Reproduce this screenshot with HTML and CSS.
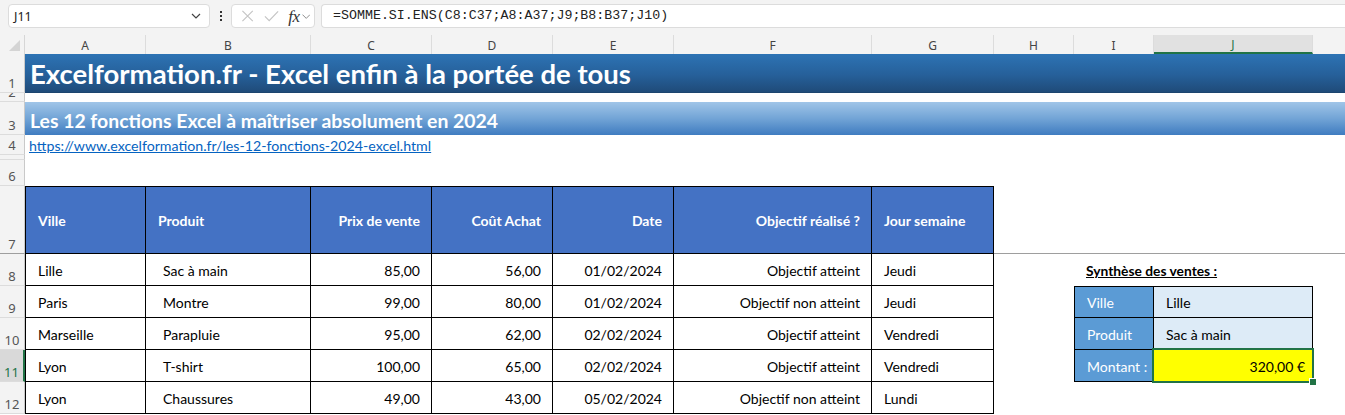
FILE: index.html
```html
<!DOCTYPE html>
<html lang="fr">
<head>
<meta charset="utf-8">
<title>Excelformation</title>
<link rel="stylesheet" href="styles.css">
</head>
<body>
<div class="app">
  <div class="fbar">
    <div class="namebox">
      <span>J11</span>
      <svg class="chev" width="10" height="6" viewBox="0 0 10 6"><path d="M1 1 L5 5 L9 1" fill="none" stroke="#444" stroke-width="1.2"/></svg>
    </div>
    <div class="vdots"><i></i><i></i><i></i></div>
    <div class="fnbox">
      <svg width="14" height="14" viewBox="0 0 14 14"><path d="M1.5 1.5 L12.5 12.5 M12.5 1.5 L1.5 12.5" stroke="#c4c4c4" stroke-width="1.2" fill="none"/></svg>
      <svg width="16" height="14" viewBox="0 0 16 14"><path d="M1 7.5 L5.5 12 L15 2" stroke="#c4c4c4" stroke-width="1.2" fill="none"/></svg>
      <span class="fx">fx</span>
      <svg class="chev small" width="9" height="5" viewBox="0 0 9 5"><path d="M0.5 0.5 L4.5 4.5 L8.5 0.5" fill="none" stroke="#888" stroke-width="1"/></svg>
    </div>
    <div class="formula">=SOMME.SI.ENS(C8:C37;A8:A37;J9;B8:B37;J10)</div>
  </div>

  <div class="sheet">
    <!-- column headers -->
    <div class="corner"><span class="tri"></span></div>
    <div class="ch">A</div><div class="ch">B</div><div class="ch">C</div><div class="ch">D</div>
    <div class="ch">E</div><div class="ch">F</div><div class="ch">G</div><div class="ch">H</div>
    <div class="ch">I</div><div class="ch sel">J</div><div class="ch last"></div>

    <!-- row 1 -->
    <div class="rh">1</div>
    <div class="title span11">Excelformation.fr - Excel enfin à la portée de tous</div>
    <!-- row 2 -->
    <div class="rh">2</div>
    <div class="blank span11"></div>
    <!-- row 3 -->
    <div class="rh">3</div>
    <div class="subtitle span11">Les 12 fonctions Excel à maîtriser absolument en 2024</div>
    <!-- row 4 -->
    <div class="rh">4</div>
    <div class="link span11"><span>https://www.excelformation.fr/les-12-fonctions-2024-excel.html</span></div>
    <!-- row 5 -->
    <div class="rh">5</div>
    <div class="blank span11"></div>
    <!-- row 6 -->
    <div class="rh">6</div>
    <div class="blank span11"></div>

    <!-- row 7 header -->
    <div class="rh freeze">7</div>
    <div class="th first">Ville</div>
    <div class="th">Produit</div>
    <div class="th r">Prix de vente</div>
    <div class="th r">Coût Achat</div>
    <div class="th r">Date</div>
    <div class="th r">Objectif réalisé ?</div>
    <div class="th">Jour semaine</div>
    <div class="blank span4 freeze-line"></div>

    <!-- row 8 -->
    <div class="rh">8</div>
    <div class="td first">Lille</div>
    <div class="td ind">Sac à main</div>
    <div class="td r">85,00</div>
    <div class="td r">56,00</div>
    <div class="td r">01/02/2024</div>
    <div class="td r">Objectif atteint</div>
    <div class="td">Jeudi</div>
    <div class="blank"></div>
    <div class="synth-title"><span>Synthèse des ventes :</span></div>
    <div class="blank span2"></div>

    <!-- row 9 -->
    <div class="rh">9</div>
    <div class="td first">Paris</div>
    <div class="td ind">Montre</div>
    <div class="td r">99,00</div>
    <div class="td r">80,00</div>
    <div class="td r">01/02/2024</div>
    <div class="td r">Objectif non atteint</div>
    <div class="td">Jeudi</div>
    <div class="blank"></div>
    <div class="sl top">Ville</div>
    <div class="sv top">Lille</div>
    <div class="blank"></div>

    <!-- row 10 -->
    <div class="rh">10</div>
    <div class="td first">Marseille</div>
    <div class="td ind">Parapluie</div>
    <div class="td r">95,00</div>
    <div class="td r">62,00</div>
    <div class="td r">02/02/2024</div>
    <div class="td r">Objectif atteint</div>
    <div class="td">Vendredi</div>
    <div class="blank"></div>
    <div class="sl">Produit</div>
    <div class="sv">Sac à main</div>
    <div class="blank"></div>

    <!-- row 11 -->
    <div class="rh sel">11</div>
    <div class="td first">Lyon</div>
    <div class="td ind">T-shirt</div>
    <div class="td r">100,00</div>
    <div class="td r">65,00</div>
    <div class="td r">02/02/2024</div>
    <div class="td r">Objectif atteint</div>
    <div class="td">Vendredi</div>
    <div class="blank"></div>
    <div class="sl">Montant :</div>
    <div class="sv amount r">320,00 €</div>
    <div class="blank"></div>

    <!-- row 12 -->
    <div class="rh">12</div>
    <div class="td first">Lyon</div>
    <div class="td ind">Chaussures</div>
    <div class="td r">49,00</div>
    <div class="td r">43,00</div>
    <div class="td r">05/02/2024</div>
    <div class="td r">Objectif non atteint</div>
    <div class="td">Lundi</div>
    <div class="blank span4"></div>
  </div>
</div>
</body>
</html>
```
FILE: styles.css
```css
* { box-sizing: border-box; }
html, body { margin: 0; padding: 0; }
body { width: 1345px; height: 415px; overflow: hidden; background: #fff; }

.app { width: 1345px; }

/* formula bar */
.fbar {
  height: 35px;
  background: #f3f3f3;
  display: flex;
  align-items: flex-start;
  padding: 4px 0 0 8px;
  font-family: "Noto Sans", "Open Sans", sans-serif;
}
.namebox {
  width: 202px;
  height: 24px;
  background: #fff;
  border: 1px solid #dcdcdc;
  border-radius: 4px;
  display: flex;
  align-items: center;
  justify-content: space-between;
  padding: 0 8px 0 5px;
  font-size: 12.5px;
  color: #222;
}
.vdots {
  width: 21px;
  height: 24px;
  display: flex;
  flex-direction: column;
  align-items: center;
  justify-content: center;
  gap: 2px;
}
.vdots i { display: block; width: 2px; height: 2px; background: #333; }
.fnbox {
  width: 84px;
  height: 24px;
  background: #fff;
  border: 1px solid #dcdcdc;
  border-radius: 4px;
  display: flex;
  align-items: center;
  padding: 0 4px 0 9px;
  gap: 10px;
}
.fnbox .fx {
  font-family: "Liberation Serif", serif;
  font-style: italic;
  font-size: 17px;
  color: #333;
  margin-left: -1px;
  margin-right: -8px;
  letter-spacing: -0.5px;
  line-height: 1;
}
.formula {
  margin-left: 6px;
  flex: 1;
  height: 24px;
  background: #fff;
  border: 1px solid #dcdcdc;
  border-right: none;
  border-radius: 4px 0 0 4px;
  font-family: "Liberation Mono", monospace;
  font-size: 13.3px;
  color: #222;
  line-height: 22px;
  padding-left: 11px;
  white-space: nowrap;
}

/* sheet grid */
.sheet {
  display: grid;
  grid-template-columns: 25px 121px 165px 121px 121px 121px 198px 122px 80px 80px 159px 32px;
  grid-template-rows: 19px 39px 9px 33px 20px 5px 26px 68px 32px 32px 32px 32px 32px;
  font-family: Lato, "Open Sans", sans-serif;
  font-size: 14px;
  color: #000;
}
.sheet > div { min-width: 0; }
.span11 { grid-column: span 11; }
.span4 { grid-column: span 4; }
.span2 { grid-column: span 2; }

.corner {
  background: #f3f3f3;
  border-right: 1px solid #d6d6d6;
  position: relative;
}
.corner .tri {
  position: absolute;
  right: 4px;
  bottom: 3px;
  width: 0; height: 0;
  border-left: 11px solid transparent;
  border-bottom: 11px solid #d4d4d4;
}
.ch {
  background: #f3f3f3;
  color: #444;
  font-family: "Noto Sans", "Open Sans", sans-serif;
  font-size: 12px;
  display: flex;
  align-items: center;
  justify-content: center;
  border-right: 1px solid #dcdcdc;
  padding-top: 1px;
}
.ch.last { border-right: none; }
.ch.sel {
  background: #e1e1e1;
  color: #217346;
  border-bottom: 2px solid #217346;
  padding-top: 2px;
}

.rh {
  background: #f3f3f3;
  color: #555;
  font-family: "Noto Sans", "Open Sans", sans-serif;
  font-size: 13px;
  display: flex;
  align-items: flex-end;
  justify-content: center;
  line-height: 15px;
  border-right: 1px solid #c9c9c9;
  border-bottom: 1px solid #dcdcdc;
  overflow: hidden;
  padding-bottom: 1px;
}
.rh.freeze { border-bottom: 1px solid #9e9e9e; }
.rh.sel {
  background: #d9d9d9;
  color: #217346;
  border-right: 2px solid #217346;
}

.title {
  background: linear-gradient(to bottom, #2d73b4 0%, #26609a 55%, #1f4b79 100%);
  color: #fff;
  font-weight: 700;
  font-size: 27.5px;
  line-height: 1;
  display: flex;
  align-items: flex-end;
  padding: 0 0 5px 5px;
  white-space: nowrap;
  border-bottom: 1px solid #1c456f;
}
.subtitle {
  background: linear-gradient(to bottom, #a0c5e8 0%, #72a4d6 50%, #3f7cc0 100%);
  color: #fff;
  font-weight: 700;
  font-size: 19.4px;
  display: flex;
  align-items: center;
  padding: 3px 0 0 5px;
  white-space: nowrap;
}
.link {
  display: flex;
  align-items: flex-end;
  padding: 0 0 1px 4px;
  white-space: nowrap;
}
.link span {
  color: #0563c1;
  text-decoration: underline;
  font-size: 14.2px;
  line-height: 17px;
}
.freeze-line { border-bottom: 1px solid #9e9e9e; }

/* main table */
.th, .td {
  display: flex;
  align-items: center;
  padding: 0 11px 0 12px;
  border-right: 1px solid #000;
  border-bottom: 1px solid #000;
  white-space: nowrap;
}
.th {
  background: #4472c4;
  color: #fff;
  font-weight: 700;
  border-top: 1px solid #000;
}
.th.first, .td.first { border-left: 1px solid #000; }
.td { padding-top: 1px; }
.r { justify-content: flex-end; }
.td.ind { padding-left: 17px; }

/* synthesis */
.synth-title {
  display: flex;
  align-items: center;
  padding: 1px 0 0 12px;
  white-space: nowrap;
  overflow: visible;
  font-weight: 700;
  font-size: 13.8px;
}
.synth-title span { text-decoration: underline; }
.sl, .sv {
  display: flex;
  align-items: center;
  padding: 1px 8px 0 12px;
  border-right: 1px solid #000;
  border-bottom: 1px solid #000;
  white-space: nowrap;
}
.sl {
  background: #5b9bd5;
  color: #fff;
  border-left: 1px solid #000;
}
.sv { background: #ddebf7; }
.sl.top, .sv.top { border-top: 1px solid #000; }
.sv.amount {
  background: #ffff00;
  position: relative;
  padding-right: 7px;
}
.sv.amount::after {
  content: "";
  position: absolute;
  left: -2px; top: -2px; right: -2px; bottom: -2px;
  border: 2px solid #217346;
  pointer-events: none;
}
.sv.amount::before {
  content: "";
  position: absolute;
  right: -5px;
  bottom: -5px;
  width: 6px;
  height: 6px;
  background: #217346;
  border: 1px solid #fff;
  z-index: 2;
}
```
